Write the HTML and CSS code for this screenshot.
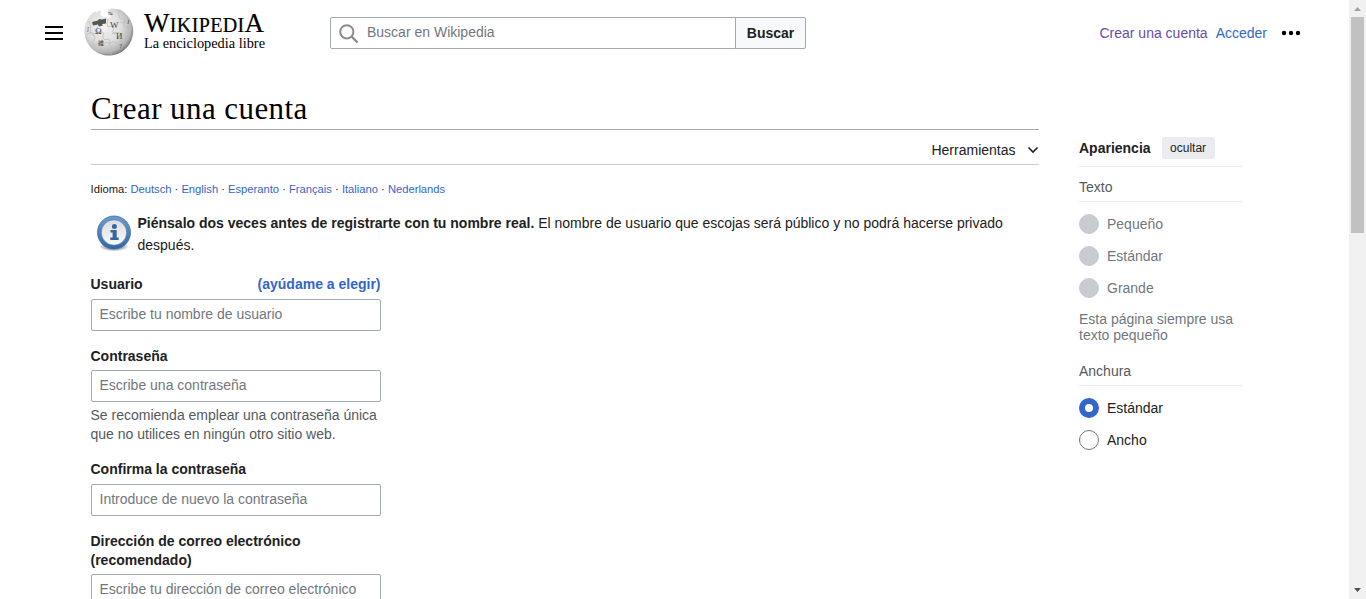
FILE: index.html
```html
<!DOCTYPE html>
<html lang="es">
<head>
<meta charset="utf-8">
<title>Crear una cuenta - Wikipedia, la enciclopedia libre</title>
<link rel="stylesheet" href="styles.css">
</head>
<body>
<div class="page">
  <header class="header">
    <svg class="menu" width="20" height="20" viewBox="0 0 20 20"><path d="M1 3h18v2H1zM1 9h18v2H1zM1 15h18v2H1z"/></svg>
    <a class="logo">
      <svg width="184" height="52" viewBox="0 0 184 52">
        <defs>
          <radialGradient id="globe" cx=".4" cy=".38" r=".65"><stop offset="0" stop-color="#f3f3f3"/><stop offset=".55" stop-color="#dedede"/><stop offset=".85" stop-color="#b5b5b5"/><stop offset="1" stop-color="#777"/></radialGradient>
        </defs>
        <g transform="translate(0 -1)">
          <path d="M7.500 9 11 6.500l2 1 2-2 2 1-1 3 4 3 2-1 1 2 4-1-1-3-3-2 2-3 3-1 8 1A24.400 24.400 0 1 1 7.500 9z" fill="url(#globe)"/>
          <path d="M8 17l6-1.500 1-1.500 3 .5 4-1v5l-4 .5 1 1.500-4 1-1-2-5 1z" fill="#555"/>
          <g fill="none" stroke="#bbb" stroke-width=".8">
            <path d="M5 16q3 8 1 12 4 1 5 5-4 4 0 9M14 21q-2 5 1 7 4-2 5 1-3 3 1 6 4-2 5 1-2 5 2 9-2 2-1 5M24 14q-2 6 0 8 5-2 6 1-3 4 0 6 5-3 7 0-3 5 0 8 3-1 5 2M35 6q-1 5 1 8 4-1 5 2-3 4 1 7 5-2 5 1M3 29q5-3 8 0 3-4 6-1M11 40q5-4 8-1 4-3 7-1 3-3 7 0M28 29q2-3 5-1M36 17q3 2 6-1"/>
          </g>
          <g class="glyphs">
            <text x="11" y="29">Ω</text><text x="26" y="23">W</text><text x="32" y="34">И</text><text x="14" y="40" font-size="6">維</text><text x="24" y="10" font-size="5">ณ</text><text x="43" y="19" font-size="6">J</text><text x="35" y="43" font-size="7">?</text><text x="3" y="26" font-size="6">ʃ</text>
          </g>
        </g>
        <g class="wordmark">
          <text x="60" y="26" textLength="120" lengthAdjust="spacing"><tspan font-size="27">W</tspan><tspan font-size="20">IKIPEDI</tspan><tspan font-size="27">A</tspan></text>
          <text class="tagline" x="60" y="42" textLength="121" lengthAdjust="spacingAndGlyphs">La enciclopedia libre</text>
        </g>
      </svg>
    </a>
    <form class="search">
      <div class="search-field">
        <svg width="20" height="20" viewBox="0 0 20 20" fill="none" stroke="#8c8c8c"><circle cx="7.800" cy="7.800" r="6.600" stroke-width="2"/><path d="m12.500 12.500 6 6" stroke-width="2.400"/></svg>
        <span>Buscar en Wikipedia</span>
      </div>
      <div class="search-button">Buscar</div>
    </form>
    <nav class="user-links">
      <a class="visited">Crear una cuenta</a>
      <a>Acceder</a>
      <svg width="20" height="20" viewBox="0 0 20 20"><circle cx="3" cy="10" r="2.200"/><circle cx="10" cy="10" r="2.200"/><circle cx="17" cy="10" r="2.200"/></svg>
    </nav>
  </header>
  <div class="columns">
    <main class="main">
      <h1>Crear una cuenta</h1>
      <div class="toolbar"><span>Herramientas</span><svg width="12" height="12" viewBox="0 0 12 12" fill="none" stroke="#202122" stroke-width="1.600"><path d="m1.500 3.500 4.500 4.500 4.500-4.500"/></svg></div>
      <div class="languages">Idioma: <a>Deutsch</a> · <a>English</a> · <a>Esperanto</a> · <a>Français</a> · <a>Italiano</a> · <a>Nederlands</a></div>
      <div class="notice">
        <svg width="40" height="40" viewBox="0 0 40 40">
          <defs>
            <linearGradient id="ring" x2="0" y2="1"><stop offset="0" stop-color="#6e9bd0"/><stop offset="1" stop-color="#3465a4"/></linearGradient>
            <linearGradient id="disc" x2="0" y2="1"><stop offset="0" stop-color="#dcdcdc"/><stop offset="1" stop-color="#fafafa"/></linearGradient>
            <radialGradient id="shade"><stop offset=".5" stop-color="#999"/><stop offset="1" stop-color="#999" stop-opacity="0"/></radialGradient>
          </defs>
          <ellipse cx="20" cy="34.500" rx="15" ry="5" fill="url(#shade)"/>
          <circle cx="20" cy="20.500" r="16.500" fill="url(#ring)" stroke="#3b6ba9" stroke-width=".8"/>
          <circle cx="20" cy="20.500" r="12.700" fill="url(#disc)" stroke="#3b6ba9" stroke-width=".6"/>
          <circle cx="20.400" cy="14.500" r="2.500" fill="#3465a4"/>
          <path d="M16.500 18h6.200v7.600h2v2.400h-8.400v-2.400h2.300v-5.200h-2.100z" fill="#3465a4"/>
        </svg>
        <p><b>Piénsalo dos veces antes de registrarte con tu nombre real.</b> El nombre de usuario que escojas será público y no podrá hacerse privado después.</p>
      </div>
      <form class="form">
        <div class="field"><div class="label roomy split"><span>Usuario</span><a>(ayúdame a elegir)</a></div><div class="input">Escribe tu nombre de usuario</div></div>
        <div class="field"><div class="label">Contraseña</div><div class="input">Escribe una contraseña</div><p class="help">Se recomienda emplear una contraseña única que no utilices en ningún otro sitio web.</p></div>
        <div class="field"><div class="label roomy">Confirma la contraseña</div><div class="input">Introduce de nuevo la contraseña</div></div>
        <div class="field"><div class="label">Dirección de correo electrónico<br>(recomendado)</div><div class="input">Escribe tu dirección de correo electrónico</div></div>
      </form>
    </main>
    <aside class="appearance">
      <div class="appearance-head"><b>Apariencia</b><span class="hide">ocultar</span></div>
      <div class="group">Texto</div>
      <div class="radio disabled"><i></i>Pequeño</div>
      <div class="radio disabled"><i></i>Estándar</div>
      <div class="radio disabled"><i></i>Grande</div>
      <p class="hint">Esta página siempre usa texto pequeño</p>
      <div class="group">Anchura</div>
      <div class="radio checked"><i></i>Estándar</div>
      <div class="radio"><i></i>Ancho</div>
    </aside>
  </div>
</div>
<div class="scrollbar">
  <svg width="17" height="17" viewBox="0 0 17 17"><path d="M5 11h7L8.500 7z" fill="#a3a3a3"/></svg>
  <div class="thumb"></div>
  <svg class="down" width="17" height="17" viewBox="0 0 17 17"><path d="M5 6h7l-3.500 4z" fill="#505050"/></svg>
</div>
</body>
</html>
```
FILE: styles.css
```css
* { box-sizing: border-box; }
body {
  margin: 0;
  height: 599px;
  overflow: hidden;
  display: flex;
  background: #fff;
  color: #202122;
  font: 14px/22px "Liberation Sans", Arial, sans-serif;
}
p { margin: 0; }
svg { flex: none; display: block; }
a { color: #3366cc; }
a.visited { color: #6a4ba8; }
.page { width: 1349px; flex: none; }

.header {
  height: 66px;
  padding: 0 48px 0 44px;
  display: flex;
  align-items: center;
}
.logo { margin: 0 0 3px 20px; }
.glyphs { font: 9px "Liberation Serif", "Noto Sans CJK JP", serif; fill: #444; }
.glyphs [font-size="5"] { font-size: 5px; }
.glyphs [font-size="6"] { font-size: 6px; }
.glyphs [font-size="7"] { font-size: 7px; }
.wordmark { font-family: "Liberation Serif", serif; fill: #000; stroke: #000; stroke-width: .2px; }
.tagline { font-size: 14.500px; stroke: none; }
.search { margin-left: 62px; display: flex; width: 476px; height: 32px; }
.search-field {
  width: 406px;
  border: 1px solid #a2a9b1;
  border-radius: 2px 0 0 2px;
  display: flex;
  align-items: center;
  gap: 8px;
  padding: 0 8px;
  color: #72777d;
}
.search-field svg { margin-top: 1px; }
.search-field span { margin-bottom: 2px; }
.search-button {
  width: 71px;
  margin-left: -1px;
  border: 1px solid #a2a9b1;
  border-radius: 0 2px 2px 0;
  background: #f8f9fa;
  font-weight: bold;
  text-align: center;
  line-height: 31px;
}
.user-links { margin-left: auto; display: flex; align-items: center; gap: 8px; }
.user-links svg { margin-left: 6px; }

.columns { display: flex; gap: 40px; padding-left: 91px; }
.main { width: 948px; }
h1 {
  height: 64px;
  margin: 0;
  padding-top: 24px;
  border-bottom: 1px solid #a2a9b1;
  font: 31px/37px "Liberation Serif", Georgia, serif;
  letter-spacing: .42px;
  color: #000;
}
.toolbar {
  height: 35px;
  padding-bottom: 1px;
  border-bottom: 1px solid #c8ccd1;
  display: flex;
  justify-content: flex-end;
  align-items: center;
  gap: 11.500px;
  line-height: 34px;
  padding-top: 6px;
}
.languages { margin: 15px 0 0 -.4px; font-size: 11.200px; line-height: 18px; }
.notice { display: flex; margin-top: 14px; padding-left: 3px; height: 44px; }
.notice p { width: 890px; margin-left: 3.500px; line-height: 22px; }

.form { width: 290px; margin-top: 19px; }
.field { margin-bottom: 16px; }
.label {
  margin-left: -.5px;
  padding: 0 .5px 4px 0;
  font-weight: bold;
  line-height: 19px;
}
.roomy { padding-bottom: 5px; }
.split { display: flex; justify-content: space-between; }
.input {
  height: 32px;
  padding: 0 7.500px;
  border: 1px solid #a2a9b1;
  border-radius: 2px;
  line-height: 29px;
  color: #72777d;
}
.help { margin-left: -.5px; padding-top: 4px; line-height: 19px; color: #54595d; }

.appearance { width: 164px; padding-top: 71px; }
.appearance-head { height: 30px; display: flex; gap: 11px; border-bottom: 1px solid #eaecf0; }
.hide {
  height: 22px;
  padding: 0 8.500px;
  border-radius: 2px;
  background: #eaecf0;
  font-size: 12px;
}
.group { height: 35px; line-height: 40px; margin-bottom: 12px; border-bottom: 1px solid #eaecf0; color: #54595d; }
.radio { display: flex; align-items: center; gap: 8px; height: 20px; margin-bottom: 12px; }
.radio i { width: 20px; height: 20px; border: 1px solid #72777d; border-radius: 50%; }
.disabled { color: #72777d; }
.disabled i { background: #c8ccd1; border-color: #c8ccd1; }
.checked i { border: 6px solid #3366cc; }
.hint { line-height: 16px; margin-bottom: 8px; margin-top: 13px; color: #72777d; }

.scrollbar { width: 17px; height: 599px; background: #f1f1f1; display: flex; flex-direction: column; }
.thumb { width: 13px; height: 216px; margin-left: 2px; background: #c1c1c1; }
.down { margin-top: auto; }
```
